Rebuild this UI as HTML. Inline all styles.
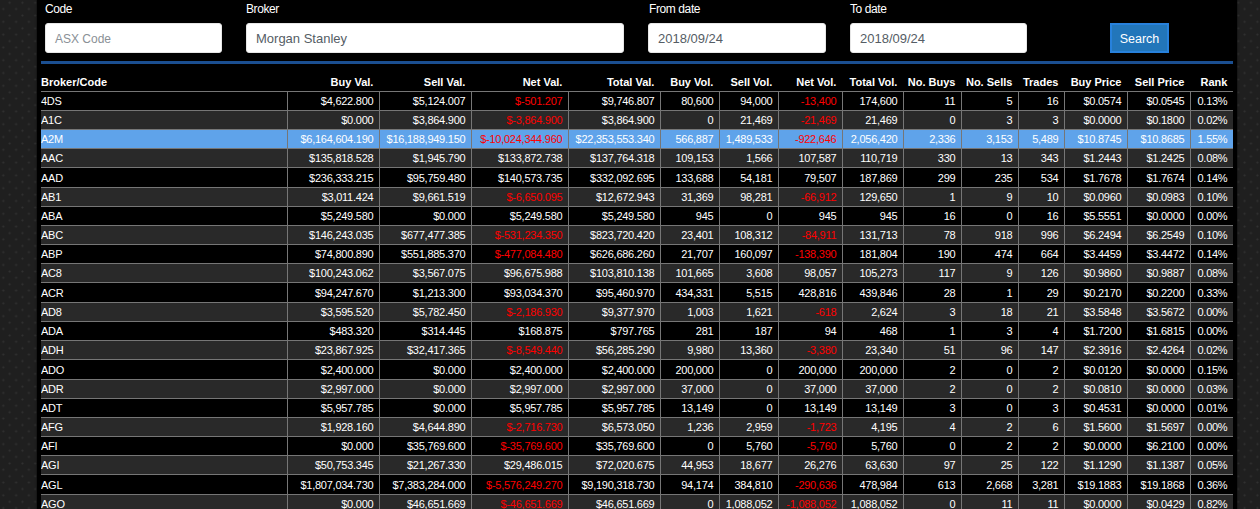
<!DOCTYPE html>
<html><head><meta charset="utf-8">
<style>
html,body{margin:0;padding:0;}
body{width:1260px;height:509px;overflow:hidden;position:relative;background-color:#1f1f1f;
background-image:radial-gradient(circle at 50% 50%, #313131 0.5px, rgba(49,49,49,0) 1.5px), radial-gradient(circle at 50% 50%, #313131 0.5px, rgba(49,49,49,0) 1.5px);
background-size:12.8px 12.8px,12.8px 12.8px;background-position:3.26px -3.65px, -3.1px 2.63px;
font-family:"Liberation Sans",sans-serif;}
#wrap{position:absolute;left:37px;top:-5px;width:1200px;height:520px;background:#000;box-shadow:0 0 2px rgba(0,0,0,.8);}
.lbl{position:absolute;top:2px;color:#fff;font-size:12px;line-height:15px;letter-spacing:-0.4px;}
.inp{position:absolute;top:23px;height:30px;background:#fff;border-radius:3px;box-sizing:border-box;border:1px solid #e6e6e6;}
.inp span{position:absolute;left:9px;top:7px;font-size:13px;line-height:15px;color:#555d65;white-space:nowrap;}
.inp span.ph{color:#8a9096;font-size:12px;top:8px;}
.btn{position:absolute;left:1110px;top:23px;width:59px;height:30px;box-sizing:border-box;border:2px solid #2781dc;background:#2276ba;color:#fff;font-size:12.5px;line-height:28px;text-align:center;}
.bar{position:absolute;left:41px;top:61px;width:1192px;height:3px;background:#1b4f91;}
#tbl{position:absolute;left:41px;top:64px;width:1192px;height:445px;}
.hdr{position:absolute;left:0;top:0;width:1192px;height:27px;border-bottom:1px solid #767676;}
.hdr .c{font-weight:bold;top:11px;}
.c{position:absolute;box-sizing:border-box;white-space:nowrap;color:#fff;font-size:11px;line-height:14px;overflow:hidden;}
.r{text-align:right;padding-right:5.6px;}
.row .r{padding-right:5.6px;}
.l{text-align:left;}
.row{position:absolute;left:0;width:1192px;height:18px;border-bottom:1px solid #767676;background:#000;}
.row .c{top:2px;letter-spacing:-0.25px;}
.row.alt{background:#292929;}
.row.hl{background:#5fa3ea;}
.neg{color:#f00;}
.row i{position:absolute;top:0;width:1px;height:100%;background:#767676;}
</style></head><body>
<div id="wrap"></div>
<div class="lbl" style="left:45px">Code</div>
<div class="lbl" style="left:246px">Broker</div>
<div class="lbl" style="left:649px">From date</div>
<div class="lbl" style="left:850px">To date</div>
<div class="inp" style="left:45px;width:177px"><span class="ph">ASX Code</span></div>
<div class="inp" style="left:246px;width:378px"><span>Morgan Stanley</span></div>
<div class="inp" style="left:648px;width:178px"><span>2018/09/24</span></div>
<div class="inp" style="left:850px;width:177px"><span>2018/09/24</span></div>
<div class="btn">Search</div>
<div class="bar"></div>
<div id="tbl">
<div class="hdr"><div class="c l" style="left:0px;width:246px">Broker/Code</div><div class="c r" style="left:247px;width:91px">Buy Val.</div><div class="c r" style="left:339px;width:91px">Sell Val.</div><div class="c r" style="left:431px;width:96px">Net Val.</div><div class="c r" style="left:528px;width:91px">Total Val.</div><div class="c r" style="left:620px;width:58px">Buy Vol.</div><div class="c r" style="left:679px;width:58px">Sell Vol.</div><div class="c r" style="left:738px;width:63px">Net Vol.</div><div class="c r" style="left:802px;width:60px">Total Vol.</div><div class="c r" style="left:863px;width:57px">No. Buys</div><div class="c r" style="left:921px;width:56px">No. Sells</div><div class="c r" style="left:978px;width:45px">Trades</div><div class="c r" style="left:1024px;width:62px">Buy Price</div><div class="c r" style="left:1087px;width:62px">Sell Price</div><div class="c r" style="left:1150px;width:42px">Rank</div></div>
<div class="row" style="top:28px;height:18px"><div class="c l" style="left:0px;top:2px;width:246px">4DS</div><div class="c r" style="left:247px;top:2px;width:91px">$4,622.800</div><div class="c r" style="left:339px;top:2px;width:91px">$5,124.007</div><div class="c r neg" style="left:431px;top:2px;width:96px">$-501.207</div><div class="c r" style="left:528px;top:2px;width:91px">$9,746.807</div><div class="c r" style="left:620px;top:2px;width:58px">80,600</div><div class="c r" style="left:679px;top:2px;width:58px">94,000</div><div class="c r neg" style="left:738px;top:2px;width:63px">-13,400</div><div class="c r" style="left:802px;top:2px;width:60px">174,600</div><div class="c r" style="left:863px;top:2px;width:57px">11</div><div class="c r" style="left:921px;top:2px;width:56px">5</div><div class="c r" style="left:978px;top:2px;width:45px">16</div><div class="c r" style="left:1024px;top:2px;width:62px">$0.0574</div><div class="c r" style="left:1087px;top:2px;width:62px">$0.0545</div><div class="c r" style="left:1150px;top:2px;width:42px">0.13%</div><i style="left:246px"></i><i style="left:338px"></i><i style="left:430px"></i><i style="left:527px"></i><i style="left:619px"></i><i style="left:678px"></i><i style="left:737px"></i><i style="left:801px"></i><i style="left:862px"></i><i style="left:920px"></i><i style="left:977px"></i><i style="left:1023px"></i><i style="left:1086px"></i><i style="left:1149px"></i></div><div class="row alt" style="top:47px;height:18px"><div class="c l" style="left:0px;top:2px;width:246px">A1C</div><div class="c r" style="left:247px;top:2px;width:91px">$0.000</div><div class="c r" style="left:339px;top:2px;width:91px">$3,864.900</div><div class="c r neg" style="left:431px;top:2px;width:96px">$-3,864.900</div><div class="c r" style="left:528px;top:2px;width:91px">$3,864.900</div><div class="c r" style="left:620px;top:2px;width:58px">0</div><div class="c r" style="left:679px;top:2px;width:58px">21,469</div><div class="c r neg" style="left:738px;top:2px;width:63px">-21,469</div><div class="c r" style="left:802px;top:2px;width:60px">21,469</div><div class="c r" style="left:863px;top:2px;width:57px">0</div><div class="c r" style="left:921px;top:2px;width:56px">3</div><div class="c r" style="left:978px;top:2px;width:45px">3</div><div class="c r" style="left:1024px;top:2px;width:62px">$0.0000</div><div class="c r" style="left:1087px;top:2px;width:62px">$0.1800</div><div class="c r" style="left:1150px;top:2px;width:42px">0.02%</div><i style="left:246px"></i><i style="left:338px"></i><i style="left:430px"></i><i style="left:527px"></i><i style="left:619px"></i><i style="left:678px"></i><i style="left:737px"></i><i style="left:801px"></i><i style="left:862px"></i><i style="left:920px"></i><i style="left:977px"></i><i style="left:1023px"></i><i style="left:1086px"></i><i style="left:1149px"></i></div><div class="row hl" style="top:66px;height:18px"><div class="c l" style="left:0px;top:2px;width:246px">A2M</div><div class="c r" style="left:247px;top:2px;width:91px">$6,164,604.190</div><div class="c r" style="left:339px;top:2px;width:91px">$16,188,949.150</div><div class="c r neg" style="left:431px;top:2px;width:96px">$-10,024,344.960</div><div class="c r" style="left:528px;top:2px;width:91px">$22,353,553.340</div><div class="c r" style="left:620px;top:2px;width:58px">566,887</div><div class="c r" style="left:679px;top:2px;width:58px">1,489,533</div><div class="c r neg" style="left:738px;top:2px;width:63px">-922,646</div><div class="c r" style="left:802px;top:2px;width:60px">2,056,420</div><div class="c r" style="left:863px;top:2px;width:57px">2,336</div><div class="c r" style="left:921px;top:2px;width:56px">3,153</div><div class="c r" style="left:978px;top:2px;width:45px">5,489</div><div class="c r" style="left:1024px;top:2px;width:62px">$10.8745</div><div class="c r" style="left:1087px;top:2px;width:62px">$10.8685</div><div class="c r" style="left:1150px;top:2px;width:42px">1.55%</div><i style="left:246px"></i><i style="left:338px"></i><i style="left:430px"></i><i style="left:527px"></i><i style="left:619px"></i><i style="left:678px"></i><i style="left:737px"></i><i style="left:801px"></i><i style="left:862px"></i><i style="left:920px"></i><i style="left:977px"></i><i style="left:1023px"></i><i style="left:1086px"></i><i style="left:1149px"></i></div><div class="row alt" style="top:85px;height:18px"><div class="c l" style="left:0px;top:2px;width:246px">AAC</div><div class="c r" style="left:247px;top:2px;width:91px">$135,818.528</div><div class="c r" style="left:339px;top:2px;width:91px">$1,945.790</div><div class="c r" style="left:431px;top:2px;width:96px">$133,872.738</div><div class="c r" style="left:528px;top:2px;width:91px">$137,764.318</div><div class="c r" style="left:620px;top:2px;width:58px">109,153</div><div class="c r" style="left:679px;top:2px;width:58px">1,566</div><div class="c r" style="left:738px;top:2px;width:63px">107,587</div><div class="c r" style="left:802px;top:2px;width:60px">110,719</div><div class="c r" style="left:863px;top:2px;width:57px">330</div><div class="c r" style="left:921px;top:2px;width:56px">13</div><div class="c r" style="left:978px;top:2px;width:45px">343</div><div class="c r" style="left:1024px;top:2px;width:62px">$1.2443</div><div class="c r" style="left:1087px;top:2px;width:62px">$1.2425</div><div class="c r" style="left:1150px;top:2px;width:42px">0.08%</div><i style="left:246px"></i><i style="left:338px"></i><i style="left:430px"></i><i style="left:527px"></i><i style="left:619px"></i><i style="left:678px"></i><i style="left:737px"></i><i style="left:801px"></i><i style="left:862px"></i><i style="left:920px"></i><i style="left:977px"></i><i style="left:1023px"></i><i style="left:1086px"></i><i style="left:1149px"></i></div><div class="row" style="top:104px;height:19px"><div class="c l" style="left:0px;top:3px;width:246px">AAD</div><div class="c r" style="left:247px;top:3px;width:91px">$236,333.215</div><div class="c r" style="left:339px;top:3px;width:91px">$95,759.480</div><div class="c r" style="left:431px;top:3px;width:96px">$140,573.735</div><div class="c r" style="left:528px;top:3px;width:91px">$332,092.695</div><div class="c r" style="left:620px;top:3px;width:58px">133,688</div><div class="c r" style="left:679px;top:3px;width:58px">54,181</div><div class="c r" style="left:738px;top:3px;width:63px">79,507</div><div class="c r" style="left:802px;top:3px;width:60px">187,869</div><div class="c r" style="left:863px;top:3px;width:57px">299</div><div class="c r" style="left:921px;top:3px;width:56px">235</div><div class="c r" style="left:978px;top:3px;width:45px">534</div><div class="c r" style="left:1024px;top:3px;width:62px">$1.7678</div><div class="c r" style="left:1087px;top:3px;width:62px">$1.7674</div><div class="c r" style="left:1150px;top:3px;width:42px">0.14%</div><i style="left:246px"></i><i style="left:338px"></i><i style="left:430px"></i><i style="left:527px"></i><i style="left:619px"></i><i style="left:678px"></i><i style="left:737px"></i><i style="left:801px"></i><i style="left:862px"></i><i style="left:920px"></i><i style="left:977px"></i><i style="left:1023px"></i><i style="left:1086px"></i><i style="left:1149px"></i></div><div class="row alt" style="top:124px;height:18px"><div class="c l" style="left:0px;top:2px;width:246px">AB1</div><div class="c r" style="left:247px;top:2px;width:91px">$3,011.424</div><div class="c r" style="left:339px;top:2px;width:91px">$9,661.519</div><div class="c r neg" style="left:431px;top:2px;width:96px">$-6,650.095</div><div class="c r" style="left:528px;top:2px;width:91px">$12,672.943</div><div class="c r" style="left:620px;top:2px;width:58px">31,369</div><div class="c r" style="left:679px;top:2px;width:58px">98,281</div><div class="c r neg" style="left:738px;top:2px;width:63px">-66,912</div><div class="c r" style="left:802px;top:2px;width:60px">129,650</div><div class="c r" style="left:863px;top:2px;width:57px">1</div><div class="c r" style="left:921px;top:2px;width:56px">9</div><div class="c r" style="left:978px;top:2px;width:45px">10</div><div class="c r" style="left:1024px;top:2px;width:62px">$0.0960</div><div class="c r" style="left:1087px;top:2px;width:62px">$0.0983</div><div class="c r" style="left:1150px;top:2px;width:42px">0.10%</div><i style="left:246px"></i><i style="left:338px"></i><i style="left:430px"></i><i style="left:527px"></i><i style="left:619px"></i><i style="left:678px"></i><i style="left:737px"></i><i style="left:801px"></i><i style="left:862px"></i><i style="left:920px"></i><i style="left:977px"></i><i style="left:1023px"></i><i style="left:1086px"></i><i style="left:1149px"></i></div><div class="row" style="top:143px;height:18px"><div class="c l" style="left:0px;top:2px;width:246px">ABA</div><div class="c r" style="left:247px;top:2px;width:91px">$5,249.580</div><div class="c r" style="left:339px;top:2px;width:91px">$0.000</div><div class="c r" style="left:431px;top:2px;width:96px">$5,249.580</div><div class="c r" style="left:528px;top:2px;width:91px">$5,249.580</div><div class="c r" style="left:620px;top:2px;width:58px">945</div><div class="c r" style="left:679px;top:2px;width:58px">0</div><div class="c r" style="left:738px;top:2px;width:63px">945</div><div class="c r" style="left:802px;top:2px;width:60px">945</div><div class="c r" style="left:863px;top:2px;width:57px">16</div><div class="c r" style="left:921px;top:2px;width:56px">0</div><div class="c r" style="left:978px;top:2px;width:45px">16</div><div class="c r" style="left:1024px;top:2px;width:62px">$5.5551</div><div class="c r" style="left:1087px;top:2px;width:62px">$0.0000</div><div class="c r" style="left:1150px;top:2px;width:42px">0.00%</div><i style="left:246px"></i><i style="left:338px"></i><i style="left:430px"></i><i style="left:527px"></i><i style="left:619px"></i><i style="left:678px"></i><i style="left:737px"></i><i style="left:801px"></i><i style="left:862px"></i><i style="left:920px"></i><i style="left:977px"></i><i style="left:1023px"></i><i style="left:1086px"></i><i style="left:1149px"></i></div><div class="row alt" style="top:162px;height:18px"><div class="c l" style="left:0px;top:2px;width:246px">ABC</div><div class="c r" style="left:247px;top:2px;width:91px">$146,243.035</div><div class="c r" style="left:339px;top:2px;width:91px">$677,477.385</div><div class="c r neg" style="left:431px;top:2px;width:96px">$-531,234.350</div><div class="c r" style="left:528px;top:2px;width:91px">$823,720.420</div><div class="c r" style="left:620px;top:2px;width:58px">23,401</div><div class="c r" style="left:679px;top:2px;width:58px">108,312</div><div class="c r neg" style="left:738px;top:2px;width:63px">-84,911</div><div class="c r" style="left:802px;top:2px;width:60px">131,713</div><div class="c r" style="left:863px;top:2px;width:57px">78</div><div class="c r" style="left:921px;top:2px;width:56px">918</div><div class="c r" style="left:978px;top:2px;width:45px">996</div><div class="c r" style="left:1024px;top:2px;width:62px">$6.2494</div><div class="c r" style="left:1087px;top:2px;width:62px">$6.2549</div><div class="c r" style="left:1150px;top:2px;width:42px">0.10%</div><i style="left:246px"></i><i style="left:338px"></i><i style="left:430px"></i><i style="left:527px"></i><i style="left:619px"></i><i style="left:678px"></i><i style="left:737px"></i><i style="left:801px"></i><i style="left:862px"></i><i style="left:920px"></i><i style="left:977px"></i><i style="left:1023px"></i><i style="left:1086px"></i><i style="left:1149px"></i></div><div class="row" style="top:181px;height:18px"><div class="c l" style="left:0px;top:2px;width:246px">ABP</div><div class="c r" style="left:247px;top:2px;width:91px">$74,800.890</div><div class="c r" style="left:339px;top:2px;width:91px">$551,885.370</div><div class="c r neg" style="left:431px;top:2px;width:96px">$-477,084.480</div><div class="c r" style="left:528px;top:2px;width:91px">$626,686.260</div><div class="c r" style="left:620px;top:2px;width:58px">21,707</div><div class="c r" style="left:679px;top:2px;width:58px">160,097</div><div class="c r neg" style="left:738px;top:2px;width:63px">-138,390</div><div class="c r" style="left:802px;top:2px;width:60px">181,804</div><div class="c r" style="left:863px;top:2px;width:57px">190</div><div class="c r" style="left:921px;top:2px;width:56px">474</div><div class="c r" style="left:978px;top:2px;width:45px">664</div><div class="c r" style="left:1024px;top:2px;width:62px">$3.4459</div><div class="c r" style="left:1087px;top:2px;width:62px">$3.4472</div><div class="c r" style="left:1150px;top:2px;width:42px">0.14%</div><i style="left:246px"></i><i style="left:338px"></i><i style="left:430px"></i><i style="left:527px"></i><i style="left:619px"></i><i style="left:678px"></i><i style="left:737px"></i><i style="left:801px"></i><i style="left:862px"></i><i style="left:920px"></i><i style="left:977px"></i><i style="left:1023px"></i><i style="left:1086px"></i><i style="left:1149px"></i></div><div class="row alt" style="top:200px;height:18px"><div class="c l" style="left:0px;top:2px;width:246px">AC8</div><div class="c r" style="left:247px;top:2px;width:91px">$100,243.062</div><div class="c r" style="left:339px;top:2px;width:91px">$3,567.075</div><div class="c r" style="left:431px;top:2px;width:96px">$96,675.988</div><div class="c r" style="left:528px;top:2px;width:91px">$103,810.138</div><div class="c r" style="left:620px;top:2px;width:58px">101,665</div><div class="c r" style="left:679px;top:2px;width:58px">3,608</div><div class="c r" style="left:738px;top:2px;width:63px">98,057</div><div class="c r" style="left:802px;top:2px;width:60px">105,273</div><div class="c r" style="left:863px;top:2px;width:57px">117</div><div class="c r" style="left:921px;top:2px;width:56px">9</div><div class="c r" style="left:978px;top:2px;width:45px">126</div><div class="c r" style="left:1024px;top:2px;width:62px">$0.9860</div><div class="c r" style="left:1087px;top:2px;width:62px">$0.9887</div><div class="c r" style="left:1150px;top:2px;width:42px">0.08%</div><i style="left:246px"></i><i style="left:338px"></i><i style="left:430px"></i><i style="left:527px"></i><i style="left:619px"></i><i style="left:678px"></i><i style="left:737px"></i><i style="left:801px"></i><i style="left:862px"></i><i style="left:920px"></i><i style="left:977px"></i><i style="left:1023px"></i><i style="left:1086px"></i><i style="left:1149px"></i></div><div class="row" style="top:219px;height:19px"><div class="c l" style="left:0px;top:3px;width:246px">ACR</div><div class="c r" style="left:247px;top:3px;width:91px">$94,247.670</div><div class="c r" style="left:339px;top:3px;width:91px">$1,213.300</div><div class="c r" style="left:431px;top:3px;width:96px">$93,034.370</div><div class="c r" style="left:528px;top:3px;width:91px">$95,460.970</div><div class="c r" style="left:620px;top:3px;width:58px">434,331</div><div class="c r" style="left:679px;top:3px;width:58px">5,515</div><div class="c r" style="left:738px;top:3px;width:63px">428,816</div><div class="c r" style="left:802px;top:3px;width:60px">439,846</div><div class="c r" style="left:863px;top:3px;width:57px">28</div><div class="c r" style="left:921px;top:3px;width:56px">1</div><div class="c r" style="left:978px;top:3px;width:45px">29</div><div class="c r" style="left:1024px;top:3px;width:62px">$0.2170</div><div class="c r" style="left:1087px;top:3px;width:62px">$0.2200</div><div class="c r" style="left:1150px;top:3px;width:42px">0.33%</div><i style="left:246px"></i><i style="left:338px"></i><i style="left:430px"></i><i style="left:527px"></i><i style="left:619px"></i><i style="left:678px"></i><i style="left:737px"></i><i style="left:801px"></i><i style="left:862px"></i><i style="left:920px"></i><i style="left:977px"></i><i style="left:1023px"></i><i style="left:1086px"></i><i style="left:1149px"></i></div><div class="row alt" style="top:239px;height:18px"><div class="c l" style="left:0px;top:2px;width:246px">AD8</div><div class="c r" style="left:247px;top:2px;width:91px">$3,595.520</div><div class="c r" style="left:339px;top:2px;width:91px">$5,782.450</div><div class="c r neg" style="left:431px;top:2px;width:96px">$-2,186.930</div><div class="c r" style="left:528px;top:2px;width:91px">$9,377.970</div><div class="c r" style="left:620px;top:2px;width:58px">1,003</div><div class="c r" style="left:679px;top:2px;width:58px">1,621</div><div class="c r neg" style="left:738px;top:2px;width:63px">-618</div><div class="c r" style="left:802px;top:2px;width:60px">2,624</div><div class="c r" style="left:863px;top:2px;width:57px">3</div><div class="c r" style="left:921px;top:2px;width:56px">18</div><div class="c r" style="left:978px;top:2px;width:45px">21</div><div class="c r" style="left:1024px;top:2px;width:62px">$3.5848</div><div class="c r" style="left:1087px;top:2px;width:62px">$3.5672</div><div class="c r" style="left:1150px;top:2px;width:42px">0.00%</div><i style="left:246px"></i><i style="left:338px"></i><i style="left:430px"></i><i style="left:527px"></i><i style="left:619px"></i><i style="left:678px"></i><i style="left:737px"></i><i style="left:801px"></i><i style="left:862px"></i><i style="left:920px"></i><i style="left:977px"></i><i style="left:1023px"></i><i style="left:1086px"></i><i style="left:1149px"></i></div><div class="row" style="top:258px;height:18px"><div class="c l" style="left:0px;top:2px;width:246px">ADA</div><div class="c r" style="left:247px;top:2px;width:91px">$483.320</div><div class="c r" style="left:339px;top:2px;width:91px">$314.445</div><div class="c r" style="left:431px;top:2px;width:96px">$168.875</div><div class="c r" style="left:528px;top:2px;width:91px">$797.765</div><div class="c r" style="left:620px;top:2px;width:58px">281</div><div class="c r" style="left:679px;top:2px;width:58px">187</div><div class="c r" style="left:738px;top:2px;width:63px">94</div><div class="c r" style="left:802px;top:2px;width:60px">468</div><div class="c r" style="left:863px;top:2px;width:57px">1</div><div class="c r" style="left:921px;top:2px;width:56px">3</div><div class="c r" style="left:978px;top:2px;width:45px">4</div><div class="c r" style="left:1024px;top:2px;width:62px">$1.7200</div><div class="c r" style="left:1087px;top:2px;width:62px">$1.6815</div><div class="c r" style="left:1150px;top:2px;width:42px">0.00%</div><i style="left:246px"></i><i style="left:338px"></i><i style="left:430px"></i><i style="left:527px"></i><i style="left:619px"></i><i style="left:678px"></i><i style="left:737px"></i><i style="left:801px"></i><i style="left:862px"></i><i style="left:920px"></i><i style="left:977px"></i><i style="left:1023px"></i><i style="left:1086px"></i><i style="left:1149px"></i></div><div class="row alt" style="top:277px;height:18px"><div class="c l" style="left:0px;top:2px;width:246px">ADH</div><div class="c r" style="left:247px;top:2px;width:91px">$23,867.925</div><div class="c r" style="left:339px;top:2px;width:91px">$32,417.365</div><div class="c r neg" style="left:431px;top:2px;width:96px">$-8,549.440</div><div class="c r" style="left:528px;top:2px;width:91px">$56,285.290</div><div class="c r" style="left:620px;top:2px;width:58px">9,980</div><div class="c r" style="left:679px;top:2px;width:58px">13,360</div><div class="c r neg" style="left:738px;top:2px;width:63px">-3,380</div><div class="c r" style="left:802px;top:2px;width:60px">23,340</div><div class="c r" style="left:863px;top:2px;width:57px">51</div><div class="c r" style="left:921px;top:2px;width:56px">96</div><div class="c r" style="left:978px;top:2px;width:45px">147</div><div class="c r" style="left:1024px;top:2px;width:62px">$2.3916</div><div class="c r" style="left:1087px;top:2px;width:62px">$2.4264</div><div class="c r" style="left:1150px;top:2px;width:42px">0.02%</div><i style="left:246px"></i><i style="left:338px"></i><i style="left:430px"></i><i style="left:527px"></i><i style="left:619px"></i><i style="left:678px"></i><i style="left:737px"></i><i style="left:801px"></i><i style="left:862px"></i><i style="left:920px"></i><i style="left:977px"></i><i style="left:1023px"></i><i style="left:1086px"></i><i style="left:1149px"></i></div><div class="row" style="top:296px;height:19px"><div class="c l" style="left:0px;top:3px;width:246px">ADO</div><div class="c r" style="left:247px;top:3px;width:91px">$2,400.000</div><div class="c r" style="left:339px;top:3px;width:91px">$0.000</div><div class="c r" style="left:431px;top:3px;width:96px">$2,400.000</div><div class="c r" style="left:528px;top:3px;width:91px">$2,400.000</div><div class="c r" style="left:620px;top:3px;width:58px">200,000</div><div class="c r" style="left:679px;top:3px;width:58px">0</div><div class="c r" style="left:738px;top:3px;width:63px">200,000</div><div class="c r" style="left:802px;top:3px;width:60px">200,000</div><div class="c r" style="left:863px;top:3px;width:57px">2</div><div class="c r" style="left:921px;top:3px;width:56px">0</div><div class="c r" style="left:978px;top:3px;width:45px">2</div><div class="c r" style="left:1024px;top:3px;width:62px">$0.0120</div><div class="c r" style="left:1087px;top:3px;width:62px">$0.0000</div><div class="c r" style="left:1150px;top:3px;width:42px">0.15%</div><i style="left:246px"></i><i style="left:338px"></i><i style="left:430px"></i><i style="left:527px"></i><i style="left:619px"></i><i style="left:678px"></i><i style="left:737px"></i><i style="left:801px"></i><i style="left:862px"></i><i style="left:920px"></i><i style="left:977px"></i><i style="left:1023px"></i><i style="left:1086px"></i><i style="left:1149px"></i></div><div class="row alt" style="top:316px;height:18px"><div class="c l" style="left:0px;top:2px;width:246px">ADR</div><div class="c r" style="left:247px;top:2px;width:91px">$2,997.000</div><div class="c r" style="left:339px;top:2px;width:91px">$0.000</div><div class="c r" style="left:431px;top:2px;width:96px">$2,997.000</div><div class="c r" style="left:528px;top:2px;width:91px">$2,997.000</div><div class="c r" style="left:620px;top:2px;width:58px">37,000</div><div class="c r" style="left:679px;top:2px;width:58px">0</div><div class="c r" style="left:738px;top:2px;width:63px">37,000</div><div class="c r" style="left:802px;top:2px;width:60px">37,000</div><div class="c r" style="left:863px;top:2px;width:57px">2</div><div class="c r" style="left:921px;top:2px;width:56px">0</div><div class="c r" style="left:978px;top:2px;width:45px">2</div><div class="c r" style="left:1024px;top:2px;width:62px">$0.0810</div><div class="c r" style="left:1087px;top:2px;width:62px">$0.0000</div><div class="c r" style="left:1150px;top:2px;width:42px">0.03%</div><i style="left:246px"></i><i style="left:338px"></i><i style="left:430px"></i><i style="left:527px"></i><i style="left:619px"></i><i style="left:678px"></i><i style="left:737px"></i><i style="left:801px"></i><i style="left:862px"></i><i style="left:920px"></i><i style="left:977px"></i><i style="left:1023px"></i><i style="left:1086px"></i><i style="left:1149px"></i></div><div class="row" style="top:335px;height:18px"><div class="c l" style="left:0px;top:2px;width:246px">ADT</div><div class="c r" style="left:247px;top:2px;width:91px">$5,957.785</div><div class="c r" style="left:339px;top:2px;width:91px">$0.000</div><div class="c r" style="left:431px;top:2px;width:96px">$5,957.785</div><div class="c r" style="left:528px;top:2px;width:91px">$5,957.785</div><div class="c r" style="left:620px;top:2px;width:58px">13,149</div><div class="c r" style="left:679px;top:2px;width:58px">0</div><div class="c r" style="left:738px;top:2px;width:63px">13,149</div><div class="c r" style="left:802px;top:2px;width:60px">13,149</div><div class="c r" style="left:863px;top:2px;width:57px">3</div><div class="c r" style="left:921px;top:2px;width:56px">0</div><div class="c r" style="left:978px;top:2px;width:45px">3</div><div class="c r" style="left:1024px;top:2px;width:62px">$0.4531</div><div class="c r" style="left:1087px;top:2px;width:62px">$0.0000</div><div class="c r" style="left:1150px;top:2px;width:42px">0.01%</div><i style="left:246px"></i><i style="left:338px"></i><i style="left:430px"></i><i style="left:527px"></i><i style="left:619px"></i><i style="left:678px"></i><i style="left:737px"></i><i style="left:801px"></i><i style="left:862px"></i><i style="left:920px"></i><i style="left:977px"></i><i style="left:1023px"></i><i style="left:1086px"></i><i style="left:1149px"></i></div><div class="row alt" style="top:354px;height:18px"><div class="c l" style="left:0px;top:2px;width:246px">AFG</div><div class="c r" style="left:247px;top:2px;width:91px">$1,928.160</div><div class="c r" style="left:339px;top:2px;width:91px">$4,644.890</div><div class="c r neg" style="left:431px;top:2px;width:96px">$-2,716.730</div><div class="c r" style="left:528px;top:2px;width:91px">$6,573.050</div><div class="c r" style="left:620px;top:2px;width:58px">1,236</div><div class="c r" style="left:679px;top:2px;width:58px">2,959</div><div class="c r neg" style="left:738px;top:2px;width:63px">-1,723</div><div class="c r" style="left:802px;top:2px;width:60px">4,195</div><div class="c r" style="left:863px;top:2px;width:57px">4</div><div class="c r" style="left:921px;top:2px;width:56px">2</div><div class="c r" style="left:978px;top:2px;width:45px">6</div><div class="c r" style="left:1024px;top:2px;width:62px">$1.5600</div><div class="c r" style="left:1087px;top:2px;width:62px">$1.5697</div><div class="c r" style="left:1150px;top:2px;width:42px">0.00%</div><i style="left:246px"></i><i style="left:338px"></i><i style="left:430px"></i><i style="left:527px"></i><i style="left:619px"></i><i style="left:678px"></i><i style="left:737px"></i><i style="left:801px"></i><i style="left:862px"></i><i style="left:920px"></i><i style="left:977px"></i><i style="left:1023px"></i><i style="left:1086px"></i><i style="left:1149px"></i></div><div class="row" style="top:373px;height:18px"><div class="c l" style="left:0px;top:2px;width:246px">AFI</div><div class="c r" style="left:247px;top:2px;width:91px">$0.000</div><div class="c r" style="left:339px;top:2px;width:91px">$35,769.600</div><div class="c r neg" style="left:431px;top:2px;width:96px">$-35,769.600</div><div class="c r" style="left:528px;top:2px;width:91px">$35,769.600</div><div class="c r" style="left:620px;top:2px;width:58px">0</div><div class="c r" style="left:679px;top:2px;width:58px">5,760</div><div class="c r neg" style="left:738px;top:2px;width:63px">-5,760</div><div class="c r" style="left:802px;top:2px;width:60px">5,760</div><div class="c r" style="left:863px;top:2px;width:57px">0</div><div class="c r" style="left:921px;top:2px;width:56px">2</div><div class="c r" style="left:978px;top:2px;width:45px">2</div><div class="c r" style="left:1024px;top:2px;width:62px">$0.0000</div><div class="c r" style="left:1087px;top:2px;width:62px">$6.2100</div><div class="c r" style="left:1150px;top:2px;width:42px">0.00%</div><i style="left:246px"></i><i style="left:338px"></i><i style="left:430px"></i><i style="left:527px"></i><i style="left:619px"></i><i style="left:678px"></i><i style="left:737px"></i><i style="left:801px"></i><i style="left:862px"></i><i style="left:920px"></i><i style="left:977px"></i><i style="left:1023px"></i><i style="left:1086px"></i><i style="left:1149px"></i></div><div class="row alt" style="top:392px;height:18px"><div class="c l" style="left:0px;top:2px;width:246px">AGI</div><div class="c r" style="left:247px;top:2px;width:91px">$50,753.345</div><div class="c r" style="left:339px;top:2px;width:91px">$21,267.330</div><div class="c r" style="left:431px;top:2px;width:96px">$29,486.015</div><div class="c r" style="left:528px;top:2px;width:91px">$72,020.675</div><div class="c r" style="left:620px;top:2px;width:58px">44,953</div><div class="c r" style="left:679px;top:2px;width:58px">18,677</div><div class="c r" style="left:738px;top:2px;width:63px">26,276</div><div class="c r" style="left:802px;top:2px;width:60px">63,630</div><div class="c r" style="left:863px;top:2px;width:57px">97</div><div class="c r" style="left:921px;top:2px;width:56px">25</div><div class="c r" style="left:978px;top:2px;width:45px">122</div><div class="c r" style="left:1024px;top:2px;width:62px">$1.1290</div><div class="c r" style="left:1087px;top:2px;width:62px">$1.1387</div><div class="c r" style="left:1150px;top:2px;width:42px">0.05%</div><i style="left:246px"></i><i style="left:338px"></i><i style="left:430px"></i><i style="left:527px"></i><i style="left:619px"></i><i style="left:678px"></i><i style="left:737px"></i><i style="left:801px"></i><i style="left:862px"></i><i style="left:920px"></i><i style="left:977px"></i><i style="left:1023px"></i><i style="left:1086px"></i><i style="left:1149px"></i></div><div class="row" style="top:411px;height:19px"><div class="c l" style="left:0px;top:3px;width:246px">AGL</div><div class="c r" style="left:247px;top:3px;width:91px">$1,807,034.730</div><div class="c r" style="left:339px;top:3px;width:91px">$7,383,284.000</div><div class="c r neg" style="left:431px;top:3px;width:96px">$-5,576,249.270</div><div class="c r" style="left:528px;top:3px;width:91px">$9,190,318.730</div><div class="c r" style="left:620px;top:3px;width:58px">94,174</div><div class="c r" style="left:679px;top:3px;width:58px">384,810</div><div class="c r neg" style="left:738px;top:3px;width:63px">-290,636</div><div class="c r" style="left:802px;top:3px;width:60px">478,984</div><div class="c r" style="left:863px;top:3px;width:57px">613</div><div class="c r" style="left:921px;top:3px;width:56px">2,668</div><div class="c r" style="left:978px;top:3px;width:45px">3,281</div><div class="c r" style="left:1024px;top:3px;width:62px">$19.1883</div><div class="c r" style="left:1087px;top:3px;width:62px">$19.1868</div><div class="c r" style="left:1150px;top:3px;width:42px">0.36%</div><i style="left:246px"></i><i style="left:338px"></i><i style="left:430px"></i><i style="left:527px"></i><i style="left:619px"></i><i style="left:678px"></i><i style="left:737px"></i><i style="left:801px"></i><i style="left:862px"></i><i style="left:920px"></i><i style="left:977px"></i><i style="left:1023px"></i><i style="left:1086px"></i><i style="left:1149px"></i></div><div class="row alt" style="top:431px;height:18px"><div class="c l" style="left:0px;top:2px;width:246px">AGO</div><div class="c r" style="left:247px;top:2px;width:91px">$0.000</div><div class="c r" style="left:339px;top:2px;width:91px">$46,651.669</div><div class="c r neg" style="left:431px;top:2px;width:96px">$-46,651.669</div><div class="c r" style="left:528px;top:2px;width:91px">$46,651.669</div><div class="c r" style="left:620px;top:2px;width:58px">0</div><div class="c r" style="left:679px;top:2px;width:58px">1,088,052</div><div class="c r neg" style="left:738px;top:2px;width:63px">-1,088,052</div><div class="c r" style="left:802px;top:2px;width:60px">1,088,052</div><div class="c r" style="left:863px;top:2px;width:57px">0</div><div class="c r" style="left:921px;top:2px;width:56px">11</div><div class="c r" style="left:978px;top:2px;width:45px">11</div><div class="c r" style="left:1024px;top:2px;width:62px">$0.0000</div><div class="c r" style="left:1087px;top:2px;width:62px">$0.0429</div><div class="c r" style="left:1150px;top:2px;width:42px">0.82%</div><i style="left:246px"></i><i style="left:338px"></i><i style="left:430px"></i><i style="left:527px"></i><i style="left:619px"></i><i style="left:678px"></i><i style="left:737px"></i><i style="left:801px"></i><i style="left:862px"></i><i style="left:920px"></i><i style="left:977px"></i><i style="left:1023px"></i><i style="left:1086px"></i><i style="left:1149px"></i></div>
</div>
</body></html>
